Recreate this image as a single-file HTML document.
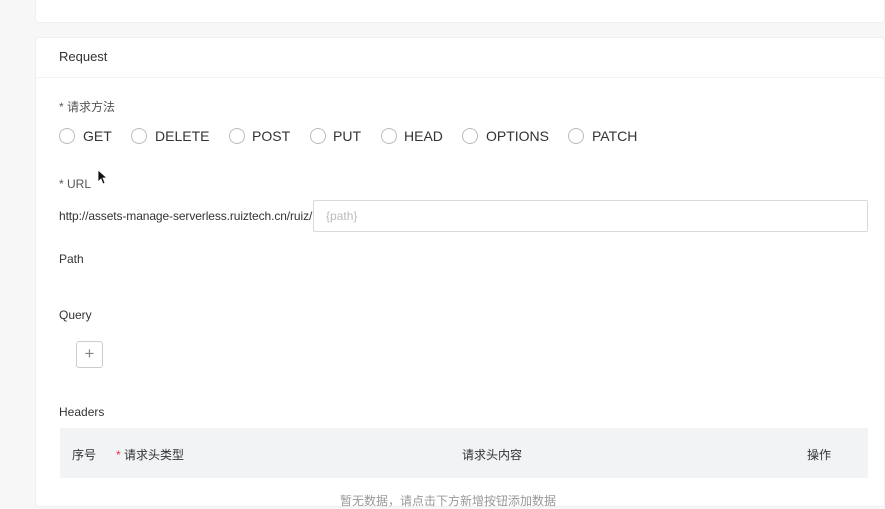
<!DOCTYPE html>
<html><head><meta charset="utf-8"><style>
*{box-sizing:border-box;margin:0;padding:0}
body{width:885px;height:498px;overflow:hidden;background:#f7f7f7;font-family:"Liberation Sans","Noto Sans CJK SC",sans-serif;color:#333;position:relative}
.card{position:absolute;left:35px;right:0;background:#fff;border:1px solid #f0f0f0;border-radius:4px}
.t{position:absolute;white-space:nowrap}
.radio{position:absolute;top:128px;width:16px;height:16px;border:1px solid #bbb;border-radius:50%;background:#fff}
.rl{position:absolute;top:128px;font-size:14px;color:#333}
</style></head><body>
<div class="card" style="top:-5px;height:28px"></div>
<div class="card" style="top:37px;height:470px">
  <div style="position:absolute;left:0;right:0;top:39px;border-top:1px solid #f2f2f2"></div>
</div>
<div class="t" style="left:59px;top:49px;font-size:13px;color:#333">Request</div>
<div class="t" style="left:59px;top:98px;font-size:12px;color:#555">* 请求方法</div>
<div class="radio" style="left:59px"></div><div class="rl" style="left:83px">GET</div>
<div class="radio" style="left:131px"></div><div class="rl" style="left:155px">DELETE</div>
<div class="radio" style="left:229px"></div><div class="rl" style="left:252px">POST</div>
<div class="radio" style="left:310px"></div><div class="rl" style="left:333px">PUT</div>
<div class="radio" style="left:381px"></div><div class="rl" style="left:404px">HEAD</div>
<div class="radio" style="left:462px"></div><div class="rl" style="left:486px">OPTIONS</div>
<div class="radio" style="left:568px"></div><div class="rl" style="left:592px">PATCH</div>
<svg style="position:absolute;left:97px;top:169px" width="10" height="16" viewBox="0 0 10 16"><path d="M1 1 L1 13 L4 10 L6 15 L8 14 L6 9 L10 9 Z" fill="#111" stroke="#fff" stroke-width="0.8"/></svg>
<div class="t" style="left:59px;top:177px;font-size:12px;color:#555">* URL</div>
<div class="t" style="left:59px;top:209px;font-size:12px;color:#333;letter-spacing:-0.1px">http://assets-manage-serverless.ruiztech.cn/ruiz/</div>
<div style="position:absolute;left:313px;top:200px;width:555px;height:32px;border:1px solid #d9d9d9;border-radius:2px;background:#fff"></div>
<div class="t" style="left:326px;top:209px;font-size:12px;color:#bbb">{path}</div>
<div class="t" style="left:59px;top:252px;font-size:12px;color:#333">Path</div>
<div class="t" style="left:59px;top:308px;font-size:12px;color:#333">Query</div>
<div style="position:absolute;left:76px;top:341px;width:27px;height:27px;border:1px solid #ccc;border-radius:3px;text-align:center;line-height:24px;font-size:17px;color:#888;font-weight:300">+</div>
<div class="t" style="left:59px;top:405px;font-size:12px;color:#333">Headers</div>
<div style="position:absolute;left:60px;top:428px;width:808px;height:50px;background:#f2f3f5"></div>
<div class="t" style="left:72px;top:446px;font-size:12px;color:#333">序号</div>
<div class="t" style="left:116px;top:446px;font-size:12px;color:#333"><span style="color:#e34">*</span> 请求头类型</div>
<div class="t" style="left:462px;top:446px;font-size:12px;color:#333">请求头内容</div>
<div class="t" style="left:807px;top:446px;font-size:12px;color:#333">操作</div>
<div class="t" style="left:340px;top:492px;font-size:12px;color:#999">暂无数据，请点击下方新增按钮添加数据</div>
</body></html>
